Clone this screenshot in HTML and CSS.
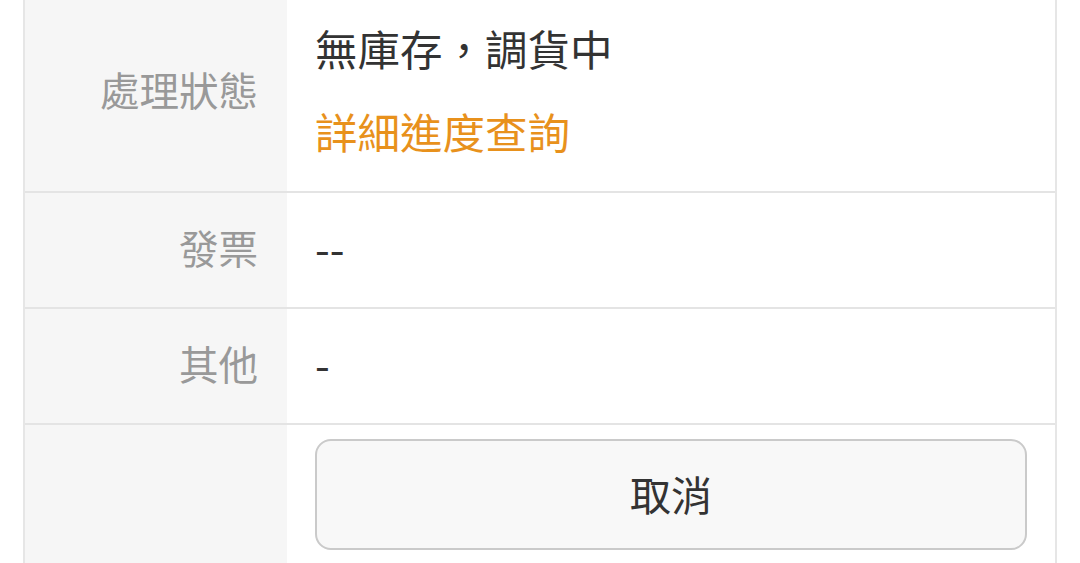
FILE: index.html
```html
<!DOCTYPE html>
<html lang="zh-Hant">
<head>
  <meta charset="UTF-8" />
  <meta name="viewport" content="width=device-width, initial-scale=1.0"/>
  <title>訂單明細</title>
  <link rel="stylesheet" href="styles.css">
</head>
<body>

  <div class="detail-table">
    <div class="row">
      <div class="label">處理狀態</div>
      <div class="value">
        <div class="line">無庫存，調貨中</div>
        <a class="link line" href="#">詳細進度查詢</a>
      </div>
    </div>
    <div class="row">
      <div class="label">發票</div>
      <div class="value"><div class="line">--</div></div>
    </div>
    <div class="row">
      <div class="label">其他</div>
      <div class="value"><div class="line">-</div></div>
    </div>
    <div class="row">
      <div class="label"></div>
      <div class="value action">
        <button class="cancel-btn">取消</button>
      </div>
    </div>
  </div>

</body>
</html>
```

FILE: styles.css
```css
* {
  box-sizing: border-box;
}
html, body {
  margin: 0;
  padding: 0;
  background-color: #fff;
  font-family: 'Noto Sans CJK TC', 'Noto Sans', sans-serif;
}
.detail-table {
  margin: -6px 23px 0;
  border-left: 2px solid #e6e6e6;
  border-right: 2px solid #e6e6e6;
}
.row {
  display: grid;
  grid-template-columns: 262px 1fr;
  border-bottom: 2px solid #e4e4e4;
}
.row:last-child {
  border-bottom: none;
}
.label {
  background-color: #f6f6f6;
  color: #999;
  font-size: 39.5px;
  text-align: right;
  padding: 0 29px 8px 0;
  display: flex;
  align-items: center;
  justify-content: flex-end;
}
.value {
  padding: 27px 28px 33px;
  font-size: 42.5px;
  color: #333;
  display: flex;
  flex-direction: column;
  gap: 29px;
}
.line {
  line-height: 54px;
  height: 54px;
}
.link {
  color: #e8911c;
  text-decoration: none;
}
.value.action {
  padding: 14px 28px 20px;
}
.cancel-btn {
  height: 111px;
  width: 100%;
  background-color: #f8f8f8;
  border: 2px solid #cacaca;
  border-radius: 16px;
  font-family: inherit;
  font-size: 41px;
  color: #333;
  padding-bottom: 4px;
  cursor: pointer;
}
```
